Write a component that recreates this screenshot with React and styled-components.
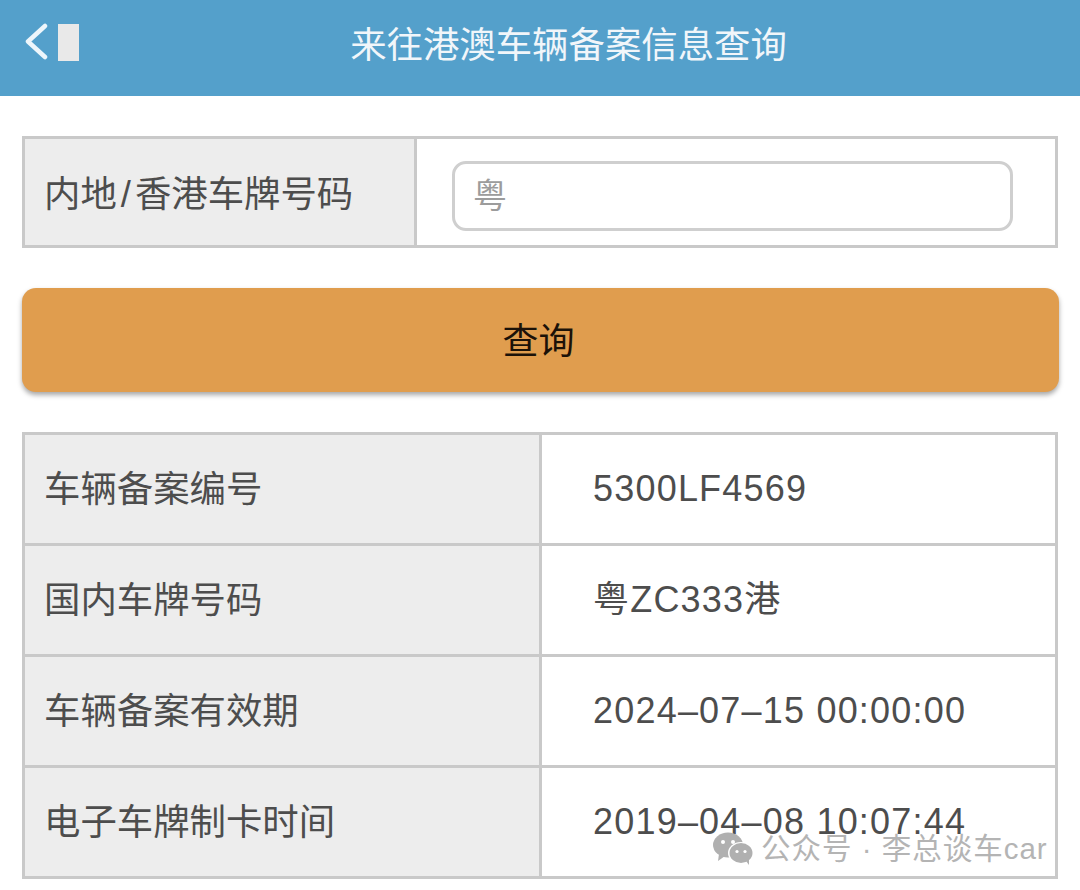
import React from 'react';
import styled, { createGlobalStyle } from 'styled-components';

const GlobalStyle = createGlobalStyle`
  html, body {
    margin: 0;
    padding: 0;
    background: #fff;
  }
  body {
    font-family: "Liberation Sans", "Noto Sans CJK SC", sans-serif;
  }
`;

const Page = styled.div`
  position: relative;
  width: 1080px;
  height: 890px;
  overflow: hidden;
  background: #fff;
`;

const Header = styled.header`
  position: relative;
  height: 96px;
  box-sizing: border-box;
  padding: 0 0 4px 57px;
  background: #54a0cb;
  display: flex;
  align-items: center;
  justify-content: center;
`;

const HeaderTitle = styled.h1`
  margin: 0;
  font-size: 36.4px;
  line-height: 1;
  font-weight: 400;
  color: #f1f6fa;
`;

const BackGroup = styled.div`
  position: absolute;
  left: 24px;
  top: 23px;
  display: flex;
  align-items: center;
  gap: 10px;
`;

const BackBlock = styled.span`
  display: block;
  width: 21px;
  height: 37px;
  background: #e9e9e9;
`;

const Content = styled.main`
  padding: 40px 22px 0;
  display: flex;
  flex-direction: column;
`;

const Table = styled.div`
  width: 1036px;
  box-sizing: border-box;
  border: 3px solid #c9c9c9;
  display: grid;
  grid-template-columns: ${p => p.$label}px 1fr;
`;

const LabelCell = styled.div`
  height: ${p => p.$h}px;
  box-sizing: border-box;
  background: #ededed;
  border-right: 3px solid #c9c9c9;
  border-top: ${p => (p.$first ? 0 : '3px solid #c9c9c9')};
  padding: ${p => p.$top || 2}px 0 0 19px;
  display: flex;
  align-items: center;
  font-size: 36.4px;
  line-height: 1;
  color: #4d4d4d;
`;

const Slash = styled.span`
  margin: 0 4px;
`;

const ValueCell = styled.div`
  height: ${p => p.$h}px;
  box-sizing: border-box;
  border-top: ${p => (p.$first ? 0 : '3px solid #c9c9c9')};
  padding-left: 51px;
  display: flex;
  align-items: center;
  font-size: 36px;
  line-height: 1;
  letter-spacing: 1.2px;
  color: #4d4d4d;
`;

const InputCell = styled.div`
  height: 106px;
  box-sizing: border-box;
  padding: 8px 0 0 35px;
  display: flex;
  align-items: center;
`;

const PlateInput = styled.input`
  width: 561px;
  height: 70px;
  box-sizing: border-box;
  border: 3px solid #cfcfcf;
  border-radius: 14px;
  padding: 0 18px;
  font-family: inherit;
  font-size: 34px;
  outline: none;
  &::placeholder {
    color: #9c9c9c;
    opacity: 1;
  }
`;

const SearchButton = styled.button`
  width: 1037px;
  height: 104px;
  margin: 40px 0;
  padding: 3px 4px 0 0;
  border: none;
  border-radius: 14px;
  background: #e09d4e;
  box-shadow: 0 3px 5px rgba(0, 0, 0, 0.35);
  font-family: inherit;
  font-size: 36px;
  line-height: 1;
  color: #1c1208;
`;

const Watermark = styled.div`
  position: absolute;
  left: 712px;
  top: 832px;
  display: flex;
  align-items: center;
  gap: 7px;
  font-size: 29.5px;
  line-height: 1;
  letter-spacing: 1px;
  color: #b4b4b4;
  white-space: nowrap;
`;

const rows = [
  ['车辆备案编号', '5300LF4569'],
  ['国内车牌号码', '粤ZC333港'],
  ['车辆备案有效期', '2024–07–15 00:00:00'],
  ['电子车牌制卡时间', '2019–04–08 10:07:44'],
];

const BackIcon = () => (
  <svg width="24" height="38" viewBox="0 0 24 38" fill="none">
    <path d="M21 3 L4 18.5 L21 34" stroke="#eef6fb" strokeWidth="4.5" strokeLinecap="round" strokeLinejoin="round" />
  </svg>
);

const WechatIcon = () => (
  <svg width="42" height="34" viewBox="0 0 42 34">
    <ellipse cx="16" cy="13" rx="15" ry="12.5" fill="#b0b0b0" />
    <path d="M7 22 L6 29 L13 24 Z" fill="#b0b0b0" />
    <circle cx="11" cy="10" r="2" fill="#fff" />
    <circle cx="21" cy="10" r="2" fill="#fff" />
    <ellipse cx="29" cy="21" rx="13" ry="11" fill="#fff" />
    <ellipse cx="29" cy="21" rx="11.5" ry="10" fill="#b0b0b0" />
    <path d="M34 29 L37 33 L37 26 Z" fill="#b0b0b0" />
    <circle cx="25" cy="19.5" r="1.6" fill="#fff" />
    <circle cx="33" cy="19.5" r="1.6" fill="#fff" />
  </svg>
);

const App = () => (
  <Page>
    <GlobalStyle />
    <Header>
      <BackGroup>
        <BackIcon />
        <BackBlock />
      </BackGroup>
      <HeaderTitle>来往港澳车辆备案信息查询</HeaderTitle>
    </Header>
    <Content>
      <Table $label={392}>
        <LabelCell $h={106} $top={6} $first>内地<Slash>/</Slash>香港车牌号码</LabelCell>
        <InputCell>
          <PlateInput placeholder="粤" />
        </InputCell>
      </Table>
      <SearchButton>查询</SearchButton>
      <Table $label={517}>
        {rows.map(([label, value], i) => (
          <React.Fragment key={label}>
            <LabelCell $h={i === 0 ? 108 : 111} $first={i === 0}>{label}</LabelCell>
            <ValueCell $h={i === 0 ? 108 : 111} $first={i === 0}>{value}</ValueCell>
          </React.Fragment>
        ))}
      </Table>
    </Content>
    <Watermark>
      <WechatIcon />
      <span>公众号 · 李总谈车car</span>
    </Watermark>
  </Page>
);

export default App;
